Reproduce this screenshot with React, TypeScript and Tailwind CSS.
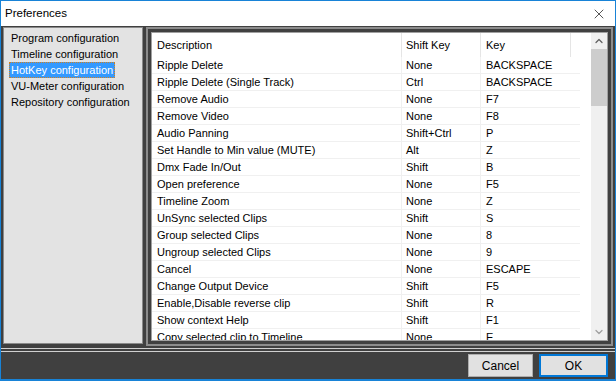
import { X, ChevronUp, ChevronDown } from "lucide-react";

const rows: [string, string, string][] = [
  ["Ripple Delete", "None", "BACKSPACE"],
  ["Ripple Delete (Single Track)", "Ctrl", "BACKSPACE"],
  ["Remove Audio", "None", "F7"],
  ["Remove Video", "None", "F8"],
  ["Audio Panning", "Shift+Ctrl", "P"],
  ["Set Handle to Min value (MUTE)", "Alt", "Z"],
  ["Dmx Fade In/Out", "Shift", "B"],
  ["Open preference", "None", "F5"],
  ["Timeline Zoom", "None", "Z"],
  ["UnSync selected Clips", "Shift", "S"],
  ["Group selected Clips", "None", "8"],
  ["Ungroup selected Clips", "None", "9"],
  ["Cancel", "None", "ESCAPE"],
  ["Change Output Device", "Shift", "F5"],
  ["Enable,Disable reverse clip", "Shift", "R"],
  ["Show context Help", "Shift", "F1"],
  ["Copy selected clip to Timeline", "None", "E"],
];

const sections = [
  "Program configuration",
  "Timeline configuration",
  "HotKey configuration",
  "VU-Meter configuration",
  "Repository configuration",
];

export default function App() {
  return (
    <div
      className="flex h-[381px] w-[616px] flex-col overflow-hidden border border-b-2 border-[#1883d7] bg-[#404040] text-[12px] text-black"
      style={{ fontFamily: '"Liberation Sans", Arial, sans-serif' }}
    >
      {/* Title bar */}
      <div className="flex h-[25px] shrink-0 items-center justify-between bg-white pl-[4px] pr-[8px]">
        <span className="text-[11.5px]">Preferences</span>
        <X size={16} strokeWidth={1} className="text-black" />
      </div>

      {/* Body */}
      <div className="flex h-[320px] shrink-0 gap-[3px] pl-[2px] pr-[2px] pt-[1px]">
        {/* Sections list */}
        <div className="h-[317px] w-[140px] shrink-0 border border-[#8a8a8a] bg-[#e3e3e3] pl-[5px] pt-[2px] text-[11px]">
          {sections.map((s, i) => (
            <div key={s} className="flex h-[16px] items-center">
              {i === 2 ? (
                <span className="border border-dotted border-[#d08020] bg-[#3399ff] px-[1px] leading-[14px] text-white">
                  {s}
                </span>
              ) : (
                <span className="px-[2px]">{s}</span>
              )}
            </div>
          ))}
        </div>

        {/* Hotkey table */}
        <div className="h-[319px] flex-1 border-2 border-[#8c8c8c] p-[3px]">
          <div className="flex h-full overflow-hidden border border-[#a0a0a0] bg-white">
            <div className="flex-1 overflow-hidden text-[11px]">
              <div className="flex h-[24px] items-center">
                <div className="h-full w-[250px] border-r border-[#e5e5e5] pl-[5px] leading-[24px]">Description</div>
                <div className="h-full w-[79px] border-r border-[#e5e5e5] pl-[4px] leading-[24px]">Shift Key</div>
                <div className="h-full w-[90px] border-r border-[#e5e5e5] pl-[5px] leading-[24px]">Key</div>
              </div>
              {rows.map(([d, s, k]) => (
                <div key={d} className="flex h-[17px] w-[428px] border-b border-[#f0f0f0]">
                  <div className="w-[250px] border-r border-[#f0f0f0] pl-[5px] leading-[17px]">{d}</div>
                  <div className="w-[79px] border-r border-[#f0f0f0] pl-[4px] leading-[17px]">{s}</div>
                  <div className="flex-1 pl-[5px] leading-[17px]">{k}</div>
                </div>
              ))}
            </div>
            {/* Scrollbar */}
            <div className="flex w-[16px] shrink-0 flex-col bg-[#f0f0f0]">
              <div className="flex h-[16px] items-center justify-center">
                <ChevronUp size={12} strokeWidth={2.5} className="text-[#606060]" />
              </div>
              <div className="h-[57px] bg-[#cdcdcd]" />
              <div className="flex-1" />
              <div className="flex h-[16px] items-center justify-center">
                <ChevronDown size={12} strokeWidth={2.5} className="text-[#a0a0a0]" />
              </div>
            </div>
          </div>
        </div>
      </div>

      {/* Separator */}
      <div className="mt-[2px] h-[4px] shrink-0 border-y border-[#d0d0d0]" />

      {/* Buttons */}
      <div className="flex flex-1 items-start justify-end gap-[6px] pr-[7px] pt-[2px]">
        <button className="h-[23px] w-[65px] border border-[#adadad] bg-[#e1e1e1] text-[12px]">Cancel</button>
        <button className="h-[23px] w-[69px] border-2 border-[#0078d7] bg-[#e1e1e1] text-[12px]">OK</button>
      </div>
    </div>
  );
}
